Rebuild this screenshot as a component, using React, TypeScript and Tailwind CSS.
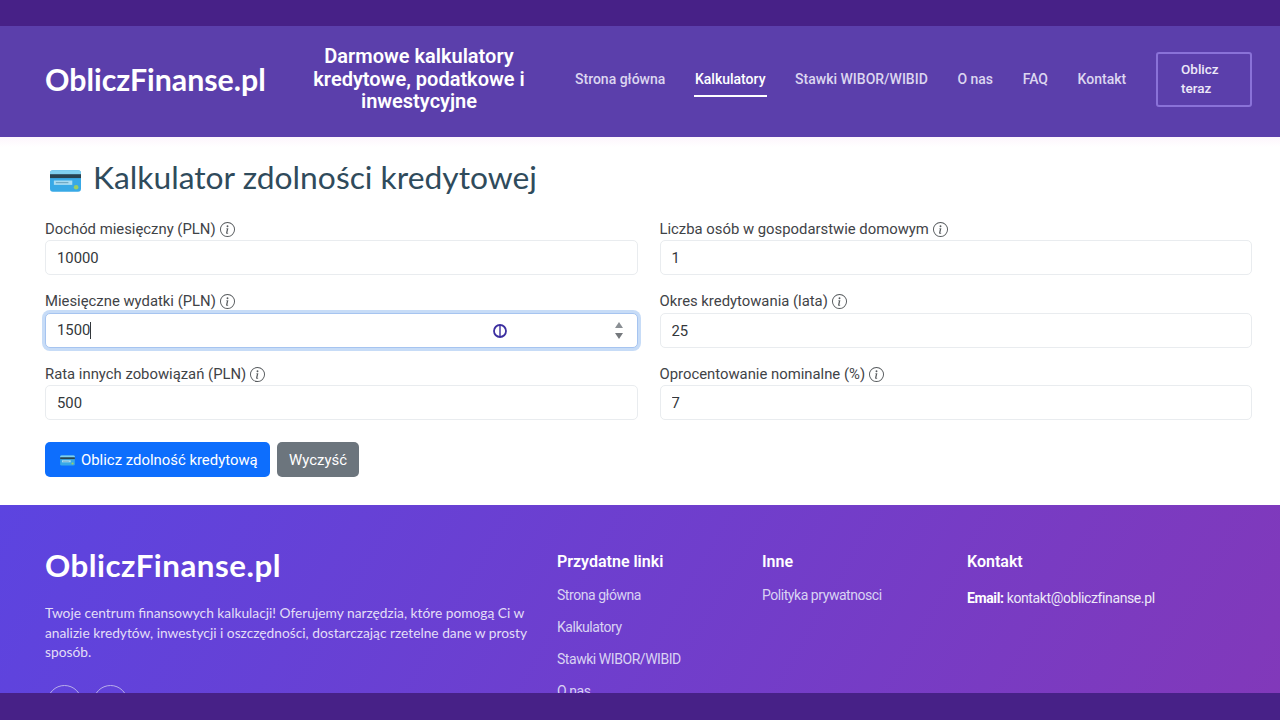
import { BsInfoCircle } from 'react-icons/bs';

const roboto = "font-['Roboto',sans-serif]";
const heading = "font-['Lato',sans-serif]";

const CardIcon = ({ className }: { className: string }) => (
  <svg viewBox="0 0 32 24" className={className}>
    <rect x="0" y="1" width="32" height="22" rx="3" fill="#38a9e6" />
    <path d="M0 4a3 3 0 0 1 3-3h26a3 3 0 0 1 3 3v2H0z" fill="#7fd0ef" />
    <rect x="0" y="5" width="32" height="4" fill="#27424f" />
    <rect x="4" y="11.5" width="19" height="4.5" fill="#a9dcf2" />
    <rect x="6" y="13" width="13" height="1.3" fill="#6fa9c4" />
    <circle cx="27" cy="18.5" r="2.4" fill="#9ccf63" />
  </svg>
);

const Label = ({ text }: { text: string }) => (
  <div className="flex h-[20px] items-center gap-[4px] text-[14.85px] text-[#3f4347]">
    <span>{text}</span>
    <BsInfoCircle className="h-[15px] w-[15px] text-[#55595c]" />
  </div>
);

const Field = ({ label, value }: { label: string; value: string }) => (
  <div className="flex flex-col gap-px">
    <Label text={label} />
    <input
      readOnly
      value={value}
      className="h-[35px] w-full rounded-[5px] border border-[#e9ecef] bg-white px-[11px] pt-px text-[14.8px] text-[#33373b] outline-none"
    />
  </div>
);

const FocusedField = ({ label, value }: { label: string; value: string }) => (
  <div className="flex flex-col gap-px">
    <Label text={label} />
    <div className="relative flex h-[35px] w-full items-center rounded-[5px] border border-[#a6c4f0] bg-white px-[11px] pt-px text-[14.8px] text-[#33373b] shadow-[0_0_0_3px_#c7dcf7]">
      <span>{value}</span>
      <span className="h-[17px] w-px bg-[#33373b]" />
      {/* mouse cursor sitting over the input */}
      <svg viewBox="0 0 16 16" className="absolute left-[446px] top-[9px] h-[16px] w-[16px]">
        <circle cx="8" cy="8" r="6" fill="none" stroke="#3c2fa0" strokeWidth="1.8" />
        <path d="M8 2v12" stroke="#3c2fa0" strokeWidth="1.4" />
      </svg>
      <div className="absolute right-[14px] top-[8px] flex flex-col gap-[5px]">
        <div className="h-0 w-0 border-x-[4.5px] border-b-[6px] border-x-transparent border-b-[#8a8f94]" />
        <div className="h-0 w-0 border-x-[4.5px] border-t-[6px] border-x-transparent border-t-[#75797d]" />
      </div>
    </div>
  </div>
);

const FooterCol = ({ title, links }: { title: string; links: string[] }) => (
  <div className="w-[205px] shrink-0 pt-[47px]">
    <div className="text-[16px] font-semibold leading-[19px] text-white">{title}</div>
    <ul className="mt-[15px] flex flex-col gap-[13px] text-[14px] leading-[19px] tracking-[-0.45px] text-[#d9d2f3]">
      {links.map((l) => (
        <li key={l}>{l}</li>
      ))}
    </ul>
  </div>
);

export default function App() {
  const nav = ['Strona główna', 'Kalkulatory', 'Stawki WIBOR/WIBID', 'O nas', 'FAQ', 'Kontakt'];

  return (
    <div className={`flex h-screen w-full flex-col overflow-hidden bg-white ${roboto}`}>
      <div className="h-[26px] shrink-0 bg-[#472187]" />

      <div className="min-h-0 flex-1 overflow-hidden">
        {/* Header */}
        <header className="flex h-[111px] items-center bg-[#5b3fab] pb-[5px] pl-[45px] pr-[28px] text-white">
          <div className={`w-[264px] shrink-0 text-[30.3px] font-bold leading-[36px] ${heading}`}>ObliczFinanse.pl</div>
          <div className="w-[220px] shrink-0 text-center text-[20px] font-semibold leading-[22.5px]">
            Darmowe kalkulatory kredytowe, podatkowe i inwestycyjne
          </div>
          <nav className="ml-[46px] flex items-center gap-[29.6px] text-[14px] font-medium text-[#dcd6f0]">
            {nav.map((item) =>
              item === 'Kalkulatory' ? (
                <span key={item} className="relative text-white">
                  {item}
                  <span className="absolute -bottom-[7px] -left-px -right-px h-[2px] bg-white" />
                </span>
              ) : (
                <span key={item}>{item}</span>
              ),
            )}
          </nav>
          <button className="ml-auto h-[55px] w-[96px] rounded-[3px] border-2 border-[#8a72d8] pl-[23px] text-left text-[13.5px] font-medium leading-[19px] text-[#ece8f8]">
            Oblicz teraz
          </button>
        </header>

        {/* Calculator */}
        <main className="h-[368px] bg-[linear-gradient(#fdf5fc,#ffffff_10px)] pl-[45px] pr-[28px] pt-[22px]">
          <h1 className={`flex h-[37px] items-center gap-[12px] text-[31.8px] font-normal text-[#2f4b5c] ${heading}`}>
            <CardIcon className="ml-[5px] mt-[6px] h-[24px] w-[31px]" />
            Kalkulator zdolności kredytowej
          </h1>
          <div className="mt-[23px] grid grid-cols-2 gap-x-[22px] gap-y-[16.5px]">
            <Field label="Dochód miesięczny (PLN)" value="10000" />
            <Field label="Liczba osób w gospodarstwie domowym" value="1" />
            <FocusedField label="Miesięczne wydatki (PLN)" value="1500" />
            <Field label="Okres kredytowania (lata)" value="25" />
            <Field label="Rata innych zobowiązań (PLN)" value="500" />
            <Field label="Oprocentowanie nominalne (%)" value="7" />
          </div>
          <div className="mt-[22px] flex gap-[7px]">
            <button className="flex h-[35px] w-[225px] items-center gap-[6px] rounded-[5px] bg-[#0d6efd] pl-[15px] pt-px text-[14.9px] text-white">
              <CardIcon className="h-[11px] w-[15px]" />
              Oblicz zdolność kredytową
            </button>
            <button className="h-[35px] w-[82px] rounded-[5px] bg-[#6c757d] pt-px text-[14.9px] text-white">Wyczyść</button>
          </div>
        </main>

        {/* Footer */}
        <footer className="flex h-[300px] bg-[linear-gradient(120deg,#5c44e0,#8338b8)] pl-[45px] text-white">
          <div className="w-[512px] shrink-0 pt-[42px]">
            <div className={`text-[31.3px] font-bold leading-[36px] tracking-[0.5px] ${heading}`}>ObliczFinanse.pl</div>
            <p className={`mt-[20px] w-[490px] text-[13.75px] leading-[19.5px] text-[#e3def7] ${heading}`}>
              Twoje centrum finansowych kalkulacji! Oferujemy narzędzia, które pomogą Ci w analizie kredytów, inwestycji i oszczędności, dostarczając rzetelne dane w prosty sposób.
            </p>
            <div className="ml-[2px] mt-[23px] flex gap-[11px]">
              <div className="h-[35px] w-[35px] rounded-full border border-[#b9aeea]" />
              <div className="h-[35px] w-[35px] rounded-full border border-[#b9aeea]" />
            </div>
          </div>
          <FooterCol title="Przydatne linki" links={['Strona główna', 'Kalkulatory', 'Stawki WIBOR/WIBID', 'O nas']} />
          <FooterCol title="Inne" links={['Polityka prywatnosci']} />
          <div className="pt-[47px]">
            <div className="text-[16px] font-semibold leading-[19px]">Kontakt</div>
            <div className="mt-[18px] text-[14px] leading-[19px] tracking-[-0.38px] text-[#ece8f8]">
              <b className="font-bold text-white">Email:</b> kontakt@obliczfinanse.pl
            </div>
          </div>
        </footer>
      </div>

      <div className="h-[27px] shrink-0 bg-[#472187]" />
    </div>
  );
}
